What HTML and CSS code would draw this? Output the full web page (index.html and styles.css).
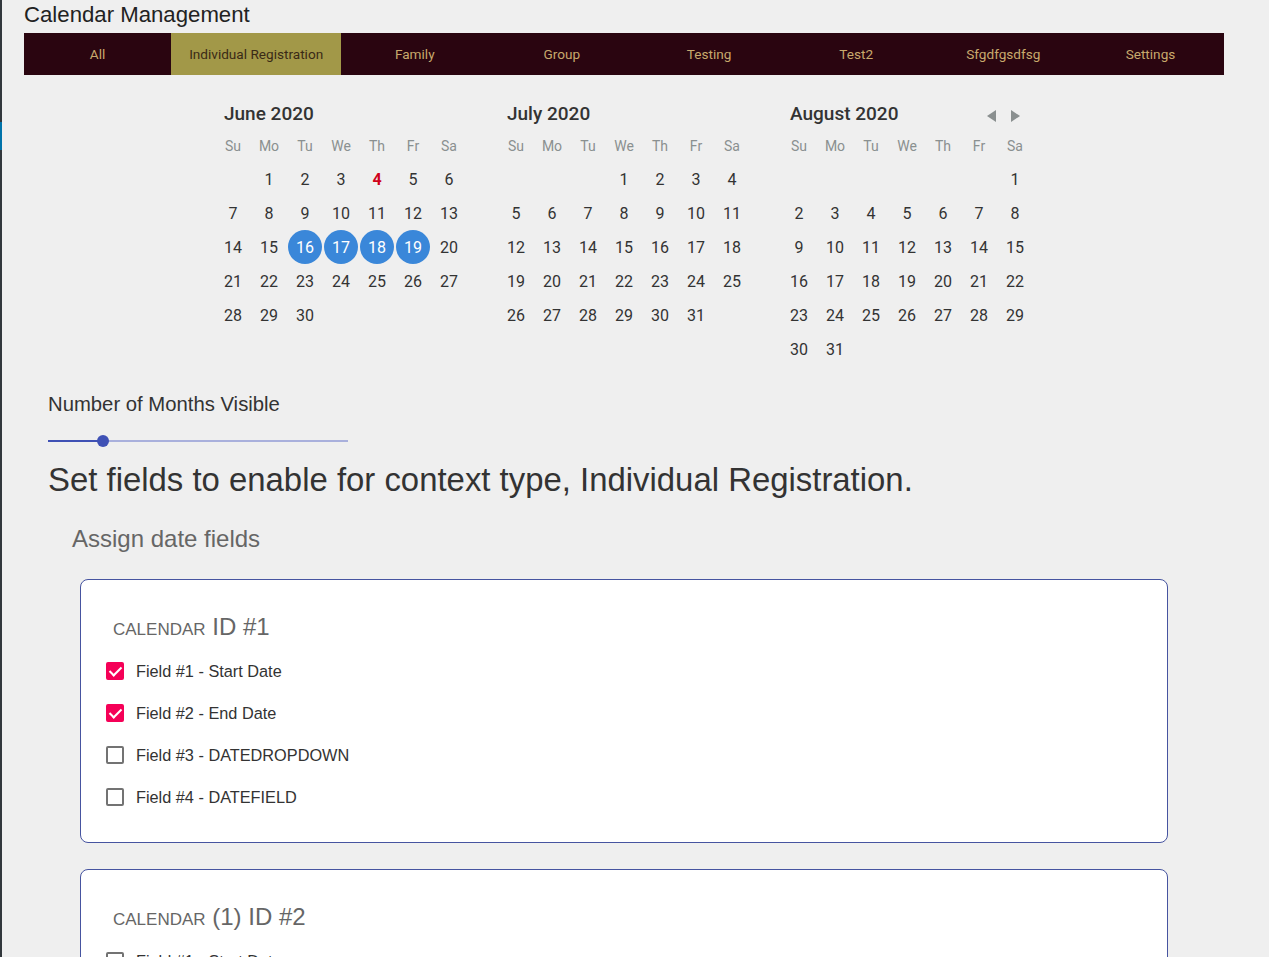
FILE: index.html
```html
<!DOCTYPE html>
<html lang="en">
<head>
<meta charset="utf-8">
<title>Calendar Management</title>
<link rel="stylesheet" href="styles.css">
</head>
<body>
<div class="shell">
  <div class="admin-edge"><div class="admin-notch"></div></div>
  <main class="main">
    <h1 class="page-title">Calendar Management</h1>
    <nav class="tabs">
      <div class="tab">All</div>
      <div class="tab active">Individual Registration</div>
      <div class="tab">Family</div>
      <div class="tab">Group</div>
      <div class="tab">Testing</div>
      <div class="tab">Test2</div>
      <div class="tab">Sfgdfgsdfsg</div>
      <div class="tab">Settings</div>
    </nav>

    <section class="months">
      <div class="month">
        <div class="month-head"><span class="month-name">June 2020</span></div>
        <div class="grid">
          <span class="wd">Su</span><span class="wd">Mo</span><span class="wd">Tu</span><span class="wd">We</span><span class="wd">Th</span><span class="wd">Fr</span><span class="wd">Sa</span>
          <span class="d"></span><span class="d">1</span><span class="d">2</span><span class="d">3</span><span class="d today">4</span><span class="d">5</span><span class="d">6</span>
          <span class="d">7</span><span class="d">8</span><span class="d">9</span><span class="d">10</span><span class="d">11</span><span class="d">12</span><span class="d">13</span>
          <span class="d">14</span><span class="d">15</span><span class="d sel"><i>16</i></span><span class="d sel"><i>17</i></span><span class="d sel"><i>18</i></span><span class="d sel"><i>19</i></span><span class="d">20</span>
          <span class="d">21</span><span class="d">22</span><span class="d">23</span><span class="d">24</span><span class="d">25</span><span class="d">26</span><span class="d">27</span>
          <span class="d">28</span><span class="d">29</span><span class="d">30</span>
        </div>
      </div>
      <div class="month">
        <div class="month-head"><span class="month-name">July 2020</span></div>
        <div class="grid">
          <span class="wd">Su</span><span class="wd">Mo</span><span class="wd">Tu</span><span class="wd">We</span><span class="wd">Th</span><span class="wd">Fr</span><span class="wd">Sa</span>
          <span class="d"></span><span class="d"></span><span class="d"></span><span class="d">1</span><span class="d">2</span><span class="d">3</span><span class="d">4</span>
          <span class="d">5</span><span class="d">6</span><span class="d">7</span><span class="d">8</span><span class="d">9</span><span class="d">10</span><span class="d">11</span>
          <span class="d">12</span><span class="d">13</span><span class="d">14</span><span class="d">15</span><span class="d">16</span><span class="d">17</span><span class="d">18</span>
          <span class="d">19</span><span class="d">20</span><span class="d">21</span><span class="d">22</span><span class="d">23</span><span class="d">24</span><span class="d">25</span>
          <span class="d">26</span><span class="d">27</span><span class="d">28</span><span class="d">29</span><span class="d">30</span><span class="d">31</span>
        </div>
      </div>
      <div class="month">
        <div class="month-head">
          <span class="month-name">August 2020</span>
          <span class="navs">
            <span class="nav prev"></span>
            <span class="nav next"></span>
          </span>
        </div>
        <div class="grid">
          <span class="wd">Su</span><span class="wd">Mo</span><span class="wd">Tu</span><span class="wd">We</span><span class="wd">Th</span><span class="wd">Fr</span><span class="wd">Sa</span>
          <span class="d"></span><span class="d"></span><span class="d"></span><span class="d"></span><span class="d"></span><span class="d"></span><span class="d">1</span>
          <span class="d">2</span><span class="d">3</span><span class="d">4</span><span class="d">5</span><span class="d">6</span><span class="d">7</span><span class="d">8</span>
          <span class="d">9</span><span class="d">10</span><span class="d">11</span><span class="d">12</span><span class="d">13</span><span class="d">14</span><span class="d">15</span>
          <span class="d">16</span><span class="d">17</span><span class="d">18</span><span class="d">19</span><span class="d">20</span><span class="d">21</span><span class="d">22</span>
          <span class="d">23</span><span class="d">24</span><span class="d">25</span><span class="d">26</span><span class="d">27</span><span class="d">28</span><span class="d">29</span>
          <span class="d">30</span><span class="d">31</span>
        </div>
      </div>
    </section>

    <section class="settings">
      <h3 class="months-label">Number of Months Visible</h3>
      <div class="slider">
        <div class="track-fill"></div>
        <div class="thumb"></div>
        <div class="track-rest"></div>
      </div>
      <h2 class="context-title">Set fields to enable for context type, Individual Registration.</h2>
      <h4 class="assign-title">Assign date fields</h4>

      <div class="card">
        <div class="card-title"><span class="sc">Calendar</span> ID #1</div>
        <label class="check-row"><span class="box checked"></span><span class="lbl">Field #1 - Start Date</span></label>
        <label class="check-row"><span class="box checked"></span><span class="lbl">Field #2 - End Date</span></label>
        <label class="check-row"><span class="box"></span><span class="lbl">Field #3 - DATEDROPDOWN</span></label>
        <label class="check-row"><span class="box"></span><span class="lbl">Field #4 - DATEFIELD</span></label>
      </div>

      <div class="card">
        <div class="card-title"><span class="sc">Calendar</span> (1) ID #2</div>
        <label class="check-row"><span class="box"></span><span class="lbl">Field #1 - Start Date</span></label>
        <label class="check-row"><span class="box"></span><span class="lbl">Field #2 - End Date</span></label>
      </div>
    </section>
  </main>
</div>
</body>
</html>
```
FILE: styles.css
```css
* { box-sizing: border-box; }
html, body { margin: 0; padding: 0; }
body {
  background: #efefef;
  font-family: "Liberation Sans", Arial, sans-serif;
  color: #333;
  overflow: hidden;
  height: 957px;
}
.shell { display: flex; min-height: 957px; }
.admin-edge {
  width: 2px;
  flex: none;
  background: #32373c;
}
.admin-notch {
  margin-top: 122px;
  height: 28px;
  background: #0073aa;
}
.main {
  width: 1222px;
  padding-left: 22px;
  flex: none;
}
.page-title {
  margin: 0;
  padding-top: 2px;
  height: 33px;
  font-size: 22.2px;
  line-height: 26px;
  font-weight: 400;
  color: #222;
}
.tabs {
  display: flex;
  width: 1200px;
  height: 42px;
  background: #2a0510;
}
.tab {
  flex: 1 1 0;
  white-space: nowrap;
  padding: 0 18px;
  display: flex;
  align-items: center;
  justify-content: center;
  font-family: Roboto, "Liberation Sans", sans-serif;
  font-size: 13.6px;
  color: #c8a96c;
}
.tab.active {
  background: #a29848;
  color: #3a2a16;
}

.months {
  display: flex;
  justify-content: center;
  gap: 31px;
  width: 1200px;
  padding-top: 25px;
  font-family: Roboto, "Liberation Sans", sans-serif;
}
.month { width: 252px; }
.month-head {
  display: flex;
  align-items: center;
  justify-content: space-between;
  height: 26px;
  padding-left: 9px;
  margin-bottom: 7px;
}
.month-name {
  font-size: 19px;
  font-weight: 500;
  color: #333;
}
.navs { display: flex; gap: 15px; margin-right: 13px; margin-top: 5px; }
.nav {
  width: 0; height: 0;
  border-top: 6px solid transparent;
  border-bottom: 6px solid transparent;
}
.nav.prev { border-right: 9px solid #8a8f8f; }
.nav.next { border-left: 9px solid #8a8f8f; }
.grid {
  display: grid;
  grid-template-columns: repeat(7, 36px);
  grid-template-rows: 29px;
  grid-auto-rows: 34px;
}
.wd {
  height: 26px;
  display: flex;
  align-items: center;
  justify-content: center;
  font-size: 14px;
  color: #8a9090;
  align-self: start;
}
.d {
  display: flex;
  align-items: center;
  justify-content: center;
  font-size: 16px;
  color: #333;
}
.d.today { color: #d0021b; font-weight: 700; }
.d.sel i {
  font-style: normal;
  width: 34px; height: 34px;
  border-radius: 50%;
  background: #3a87d9;
  color: #fff;
  display: flex;
  align-items: center;
  justify-content: center;
}

.settings { padding-left: 24px; }
.months-label {
  margin: 0;
  font-size: 20.3px;
  line-height: 24px;
  font-weight: 400;
  color: #333;
  padding-top: 26px;
}
.slider {
  width: 300px;
  height: 12px;
  margin-top: 19px;
  display: flex;
  align-items: center;
}
.track-fill { width: 55px; height: 2px; background: #3f51b5; }
.thumb {
  width: 12px; height: 12px; border-radius: 50%;
  background: #3f51b5;
  margin-left: -6px; margin-right: -6px;
  position: relative; z-index: 1;
}
.track-rest { flex: 1; height: 2px; background: #a9b0dc; }
.context-title {
  margin: 14px 0 0;
  font-size: 32.9px;
  line-height: 38px;
  font-weight: 400;
  color: #333;
}
.assign-title {
  margin: 26px 0 0 24px;
  font-size: 24px;
  line-height: 28px;
  font-weight: 400;
  color: #666;
}
.card {
  margin: 26px 0 25px 32px;
  width: 1088px;
  background: #fff;
  border: 1px solid #4654a0;
  border-radius: 8px;
  padding: 32px 24px 24px 25px;
}
.card-title {
  padding-left: 7px;
  font-size: 24px;
  line-height: 30px;
  color: #666;
  margin-bottom: 5px;
}
.sc {
  font-size: 17px;
  text-transform: uppercase;
  color: #666;
}
.check-row {
  display: flex;
  align-items: center;
  height: 42px;
  gap: 12px;
}
.box {
  width: 18px; height: 18px;
  border: 2px solid #737373;
  border-radius: 2px;
  position: relative;
  flex: none;
}
.box.checked {
  background: #f50057;
  border-color: #f50057;
}
.box.checked::after {
  content: "";
  position: absolute;
  left: 4px; top: 0px;
  width: 5px; height: 10px;
  border-right: 2px solid #fff;
  border-bottom: 2px solid #fff;
  transform: rotate(45deg);
}
.lbl { font-size: 16.3px; color: #333; }
```
